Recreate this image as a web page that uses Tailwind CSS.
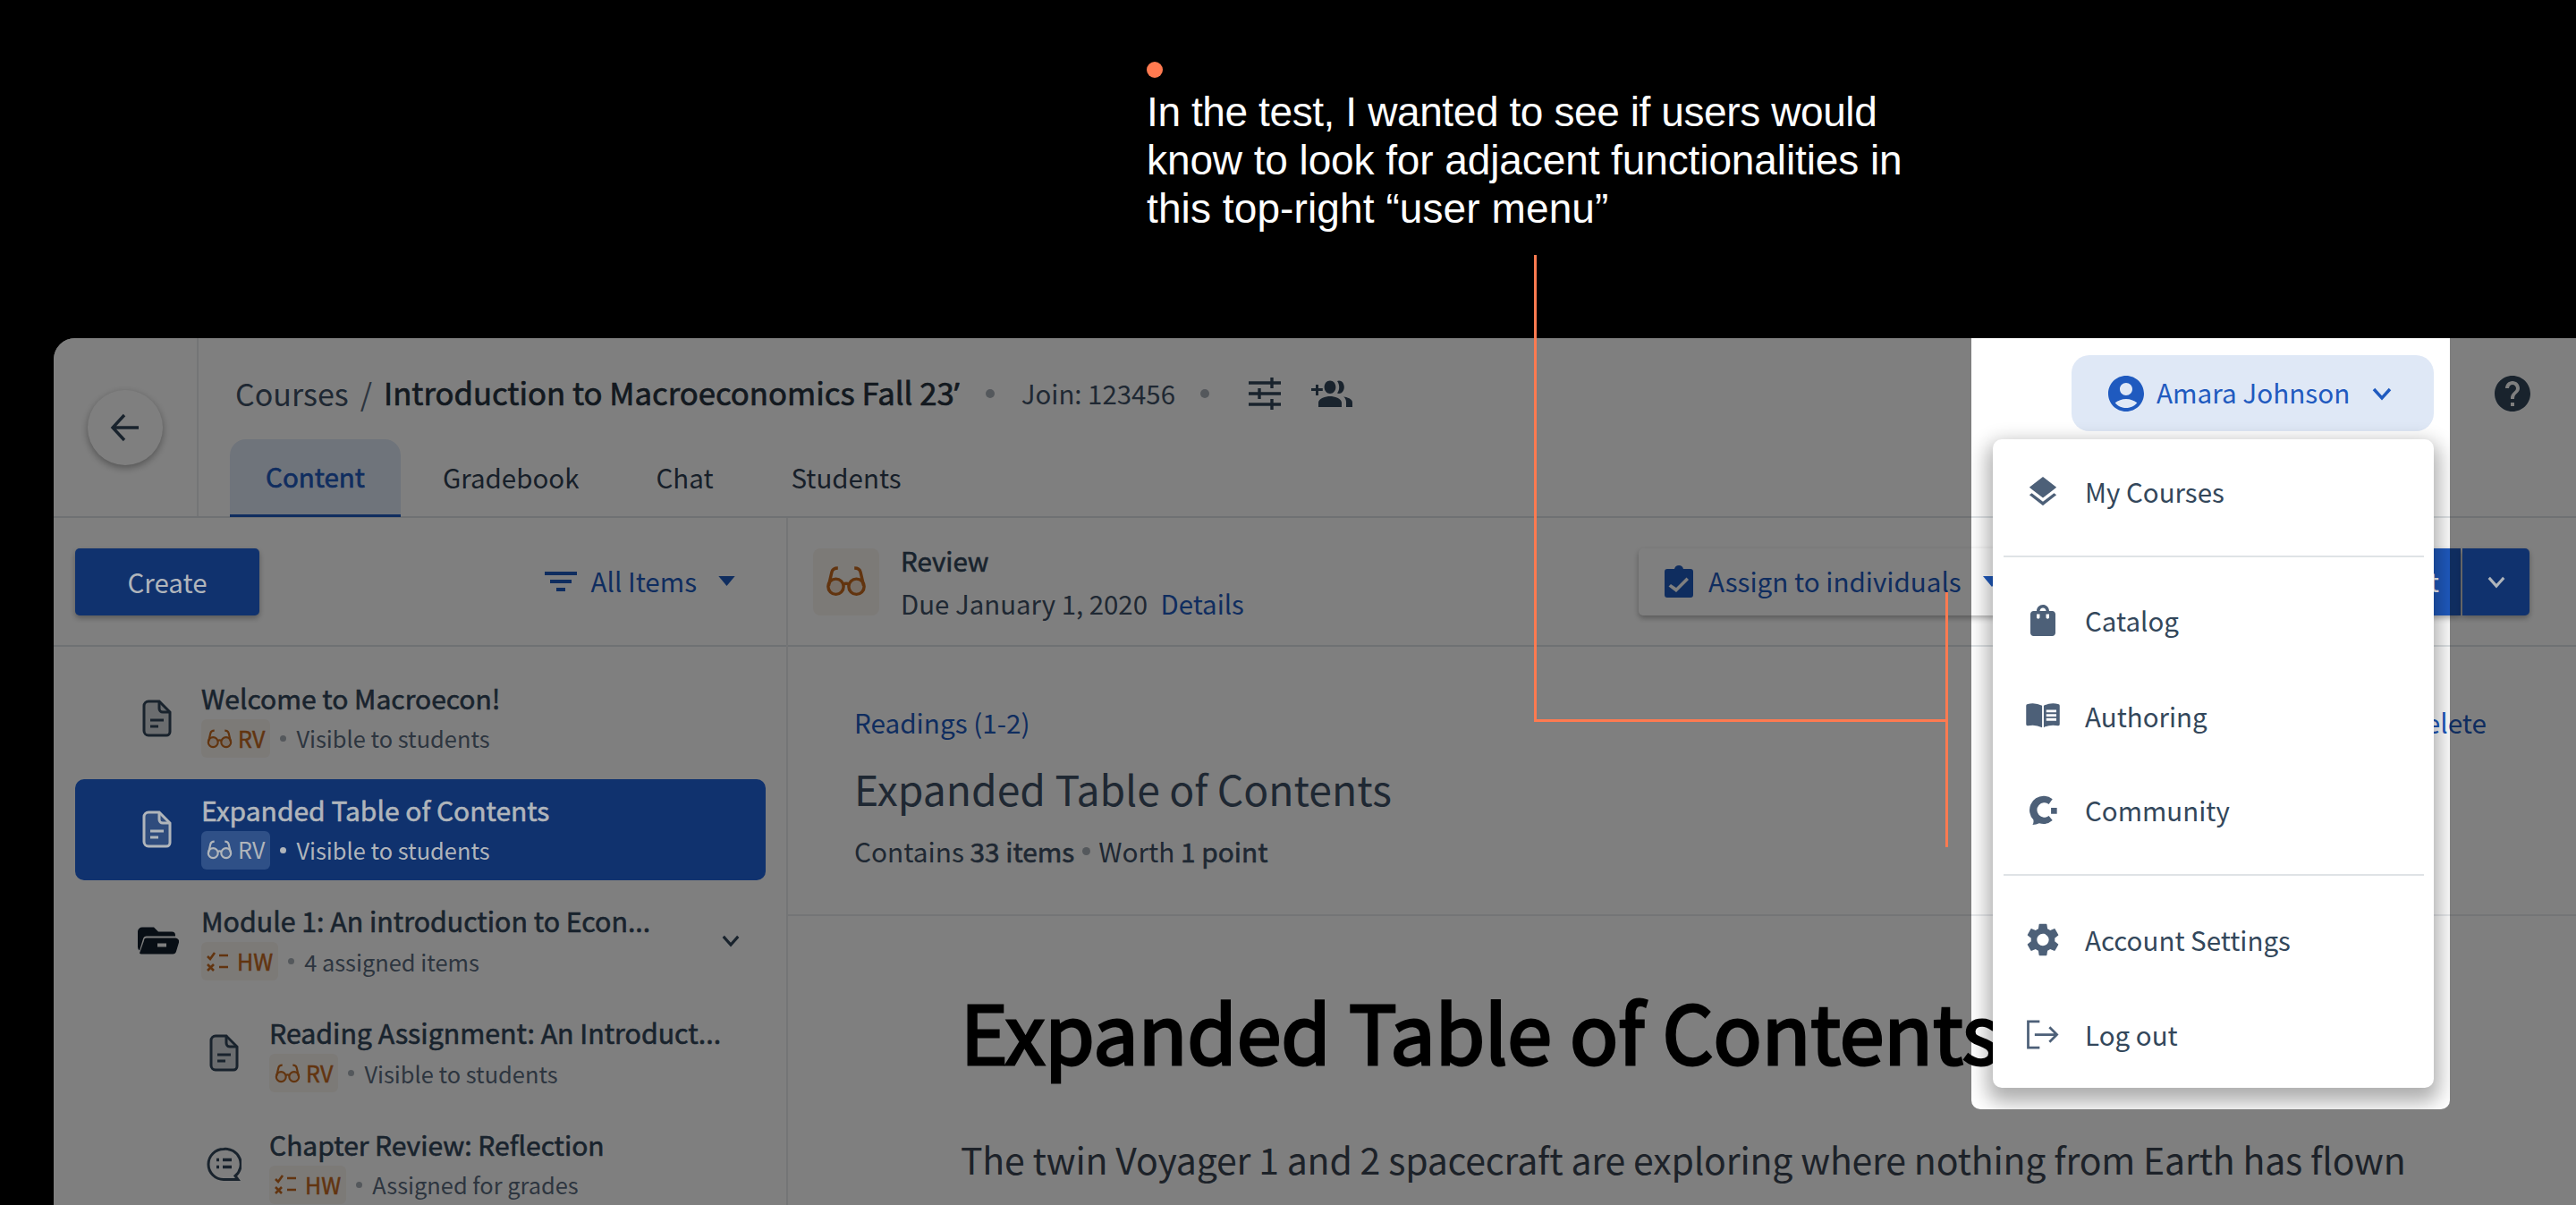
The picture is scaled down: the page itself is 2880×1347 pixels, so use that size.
<!DOCTYPE html>
<html>
<head>
<meta charset="utf-8">
<script src="https://cdn.jsdelivr.net/npm/@tailwindcss/browser@4"></script>
</head>
<body class="bg-black">
<svg class="hidden">
  <defs>
    <symbol id="doc" viewBox="0 0 34 42"><path d="M8 2h12l12 12v22a4 4 0 0 1-4 4H8a5 5 0 0 1-5-5V7a5 5 0 0 1 5-5z" fill="currentColor" fill-opacity=".2" stroke="currentColor" stroke-width="3"/><path d="M20 2v8a4 4 0 0 0 4 4h8" fill="none" stroke="currentColor" stroke-width="3"/><path d="M10 23h15M10 30h9" stroke="currentColor" stroke-width="3" fill="none"/></symbol>
    <symbol id="glasses" viewBox="0 0 40 32"><circle cx="10" cy="21" r="7.500" fill="currentColor" fill-opacity=".15" stroke="currentColor" stroke-width="3"/><circle cx="30" cy="21" r="7.500" fill="currentColor" fill-opacity=".15" stroke="currentColor" stroke-width="3"/><path d="M17 19q3-2 6 0M3 20 6 7q1-4 6-4M37 20 34 7q-1-4-6-4" fill="none" stroke="currentColor" stroke-width="3"/></symbol>
    <symbol id="hw" viewBox="0 0 26 24"><path d="M1 6l3 3 5-7M1 15l7 7M8 15l-7 7M14 5h10M14 18h10" fill="none" stroke="currentColor" stroke-width="2.600"/></symbol>
    <symbol id="chev" viewBox="0 0 24 16"><path d="M3 3l9 10 9-10" fill="none" stroke="currentColor" stroke-width="3.400"/></symbol>
    <symbol id="tri" viewBox="0 0 20 12"><path d="M0 0h20L10 12z" fill="currentColor"/></symbol>
  </defs>
</svg>
<div class="relative w-[2880px] h-[1347px] overflow-hidden font-['Noto_Sans_CJK_SC','Noto_Sans',sans-serif]">
  <section class="h-[378px] pl-[1282px] pt-[69px] font-['Liberation_Sans',sans-serif] text-white">
    <div class="w-[18px] h-[18px] rounded-full bg-[#ff7a50]"></div>
    <p class="mt-[11px] text-[46px] leading-[54px]"><span class="tracking-[-0.4px]">In the test, I wanted to see if users would</span><br><span class="tracking-[-0.1px]">know to look for adjacent functionalities in</span><br><span class="tracking-[0.1px]">this top-right “user menu”</span></p>
  </section>

  <main class="relative ml-[60px] h-[969px] bg-white rounded-tl-[24px] overflow-hidden text-[#2f3f52]">
    <header class="flex h-[201px] border-b-2 border-[#dfe3e6]">
      <div class="w-[162px] shrink-0 border-r-2 border-[#e8eaed] flex items-center justify-center">
        <button class="w-[84px] h-[84px] rounded-full bg-white shadow-[0_3px_8px_rgba(0,0,0,.35)] flex items-center justify-center text-[#33475b]">
          <svg class="w-[34px] h-[32px]" viewBox="0 0 34 32" fill="none" stroke="currentColor" stroke-width="3.400"><path d="M32 16H3M16 2 3 16l13 14"/></svg>
        </button>
      </div>
      <div class="flex-1 flex flex-col min-w-0">
        <div class="flex items-center h-[85px] mt-[19px] mb-[9px] pl-[41px] pr-[51px]">
          <span class="text-[34px] text-[#3f5166]">Courses</span>
          <span class="text-[34px] text-[#5a6b7e] mx-[13px]">/</span>
          <span class="text-[34.700px] text-[#26323f] [-webkit-text-stroke:0.7px_currentColor]">Introduction to Macroeconomics Fall 23<span class="font-['Noto_Sans',sans-serif]">’</span></span>
          <span class="w-[10px] h-[10px] rounded-full bg-[#a9b0b8] ml-[29px] mr-[30px]"></span>
          <span class="text-[29.400px] text-[#3f5166]">Join: 123456</span>
          <span class="w-[10px] h-[10px] rounded-full bg-[#a9b0b8] ml-[28px] mr-[44px]"></span>
          <svg class="w-[36px] h-[36px] text-[#33475b]" viewBox="0 0 36 36" fill="none" stroke="currentColor" stroke-width="3.400"><path d="M0 6h36M0 18h36M0 30h36M26 0v12M12 12v12M26 24v12"/></svg>
          <svg class="w-[48px] h-[32px] ml-[32px] text-[#33475b]" viewBox="0 0 24 16" fill="currentColor"><path d="M5 5V3H3.500v2H1v1.500h2.500V9H5V6.500h2.400V5zM11.500 8c1.900 0 3.200-1.600 3.200-3.600S13.400.8 11.500.8 8.300 2.400 8.300 4.400 9.600 8 11.500 8zM16.500 8c1.700 0 2.900-1.600 2.900-3.600S18.200.8 16.500.8c-.4 0-.7.100-1 .2.700 1 1.100 2.100 1.100 3.400s-.4 2.500-1.100 3.400c.3.100.6.200 1 .2zM11.500 9.500c-2.400 0-6.500 1.200-6.500 3.500v2.500h13V13c0-2.300-4.100-3.500-6.500-3.500zM19 9.800c1.200.8 1.500 2 1.500 3.200v2.500H24V13c0-2-3-3-5-3.200z"/></svg>
          <div class="ml-auto flex items-center h-[85px] w-[405px] rounded-[20px] bg-[#dfe8f6] text-[#1f5abf] pl-[41px]">
            <svg class="w-[40px] h-[40px]" viewBox="2 2 20 20" fill="currentColor"><path d="M12 2C6.480 2 2 6.480 2 12s4.480 10 10 10 10-4.480 10-10S17.520 2 12 2zm0 4c1.930 0 3.500 1.570 3.500 3.500S13.930 13 12 13s-3.500-1.570-3.500-3.500S10.070 6 12 6zm0 14c-2.030 0-4.430-.82-6.140-2.880C7.550 15.800 9.680 15 12 15s4.450.8 6.140 2.120C16.430 19.180 14.030 20 12 20z"/></svg>
            <span class="ml-[14px] text-[29.700px] leading-[40px] pb-[2px]">Amara Johnson</span>
            <svg class="w-[24px] h-[16px] ml-[24px]"><use href="#chev"/></svg>
          </div>
          <svg class="w-[40px] h-[40px] ml-[68px] text-[#33475b]" viewBox="2 2 20 20" fill="currentColor"><path d="M12 2C6.480 2 2 6.480 2 12s4.480 10 10 10 10-4.480 10-10S17.520 2 12 2zm1 17h-2v-2h2v2zm2.070-7.750l-.9.92C13.450 12.900 13 13.500 13 15h-2v-.5c0-1.100.45-2.100 1.170-2.830l1.240-1.260c.37-.36.59-.86.59-1.410 0-1.100-.9-2-2-2s-2 .9-2 2H8c0-2.210 1.790-4 4-4s4 1.790 4 4c0 .88-.36 1.680-.93 2.250z"/></svg>
        </div>
        <nav class="flex ml-[35px] h-[87px] text-[29.500px]">
          <a class="w-[191px] h-[87px] pb-[2px] rounded-t-[18px] bg-[#dfe8f6] border-b-[3px] border-[#1f5abf] flex items-center justify-center text-[#1f5abf] [-webkit-text-stroke:0.7px_currentColor]">Content</a>
          <a class="ml-[47px] pb-[3px] flex items-center">Gradebook</a>
          <a class="ml-[86px] pb-[3px] flex items-center">Chat</a>
          <a class="ml-[87px] pb-[3px] flex items-center">Students</a>
        </nav>
      </div>
    </header>

    <div class="flex h-[768px]">
      <aside class="w-[821px] shrink-0 border-r-2 border-[#e8eaed]">
        <div class="flex items-center justify-between h-[144px] border-b-2 border-[#dfe3e6] pl-[24px] pr-[56px]">
          <button class="w-[206px] h-[75px] rounded-[5px] bg-[#2064dc] text-[29.500px] shadow-[0_3px_6px_rgba(0,0,0,.3)]"><span class="relative z-10 text-[#b0b5bb]">Create</span></button>
          <div class="flex items-center text-[#1f5abf]">
            <svg class="w-[36px] h-[22px]" viewBox="0 0 36 22" fill="currentColor"><path d="M0 0h36v4H0zM6 9h24v4H6zM13 18h10v4H13z"/></svg>
            <span class="ml-[16px] text-[29.600px]">All Items</span>
            <svg class="w-[21px] h-[11px] ml-[23px]"><use href="#tri"/></svg>
          </div>
        </div>
        <ul class="flex flex-col gap-[11.700px] pt-[23px] pl-[24px] pr-[23px]">
          <li class="flex items-center h-[113px] pl-[74px]">
            <svg class="w-[34px] h-[42px] text-[#33475b] shrink-0"><use href="#doc"/></svg>
            <div class="ml-[33px]">
              <div class="text-[30px] leading-[44px] text-[#33475b] [-webkit-text-stroke:0.6px_currentColor]">Welcome to Macroecon!</div>
              <div class="flex items-center mt-[2px] h-[43px] text-[25.400px] text-[#5a6b7e]">
                <span class="flex items-center h-[43px] pl-[6px] pr-[6px] rounded-[6px] bg-[#f9f4ef] text-[#c4691e] text-[25px] [-webkit-text-stroke:0.5px_currentColor]"><svg class="w-[29px] h-[24px] mr-[6px]"><use href="#glasses"/></svg>RV</span>
                <span class="w-[7px] h-[7px] rounded-full bg-[#a9b0b8] mx-[11px]"></span>Visible to students
              </div>
            </div>
          </li>
          <li class="flex items-center h-[113px] pl-[74px] rounded-[10px] bg-[#2064dc]">
            <svg class="w-[34px] h-[42px] shrink-0 relative z-10 text-[#b0b5bb]"><use href="#doc"/></svg>
            <div class="ml-[33px] relative z-10 text-[#b0b5bb]">
              <div class="text-[30px] leading-[44px] [-webkit-text-stroke:0.6px_currentColor]">Expanded Table of Contents</div>
              <div class="flex items-center mt-[2px] h-[43px] text-[25.400px]">
                <span class="flex items-center h-[43px] pl-[6px] pr-[6px] rounded-[6px] bg-[#2f5087] text-[25px]"><svg class="w-[29px] h-[24px] mr-[6px]"><use href="#glasses"/></svg>RV</span>
                <span class="w-[7px] h-[7px] rounded-full bg-[#b0b5bb] mx-[11px]"></span>Visible to students
              </div>
            </div>
          </li>
          <li class="flex items-center h-[113px] pl-[70px]">
            <svg class="w-[46px] h-[33px] text-[#101c2a] shrink-0" viewBox="0 0 46 30" fill="currentColor"><path d="M5 0h13l5 5h15a4 4 0 0 1 4 4v1H10a4 4 0 0 0-4 3L2 26q-2-1-2-4V5a5 5 0 0 1 5-5zM10 12h32a4 4 0 0 1 4 5l-3 10a4 4 0 0 1-4 3H4a3 3 0 0 1-2-1l5-14a3 3 0 0 1 3-3zm12 6v4h10v-4z" fill-rule="evenodd"/></svg>
            <div class="ml-[25px] flex-1 min-w-0">
              <div class="text-[30.300px] leading-[44px] text-[#33475b] [-webkit-text-stroke:0.6px_currentColor]">Module 1: An introduction to Econ...</div>
              <div class="flex items-center mt-[2px] h-[43px] text-[25.400px] text-[#5a6b7e]">
                <span class="flex items-center h-[43px] pl-[6px] pr-[6px] rounded-[6px] bg-[#f9f4ef] text-[#c4691e] text-[25px] [-webkit-text-stroke:0.5px_currentColor]"><svg class="w-[26px] h-[24px] mr-[8px]"><use href="#hw"/></svg>HW</span>
                <span class="w-[7px] h-[7px] rounded-full bg-[#a9b0b8] mx-[11px]"></span>4 assigned items
              </div>
            </div>
            <svg class="w-[22px] h-[15px] mr-[28px] text-[#33475b]"><use href="#chev"/></svg>
          </li>
          <li class="flex items-center h-[113px] pl-[149px]">
            <svg class="w-[34px] h-[42px] text-[#33475b] shrink-0"><use href="#doc"/></svg>
            <div class="ml-[34px]">
              <div class="text-[30.300px] leading-[44px] text-[#33475b] [-webkit-text-stroke:0.6px_currentColor]">Reading Assignment: An Introduct...</div>
              <div class="flex items-center mt-[2px] h-[43px] text-[25.400px] text-[#5a6b7e]">
                <span class="flex items-center h-[43px] pl-[6px] pr-[6px] rounded-[6px] bg-[#f9f4ef] text-[#c4691e] text-[25px] [-webkit-text-stroke:0.5px_currentColor]"><svg class="w-[29px] h-[24px] mr-[6px]"><use href="#glasses"/></svg>RV</span>
                <span class="w-[7px] h-[7px] rounded-full bg-[#a9b0b8] mx-[11px]"></span>Visible to students
              </div>
            </div>
          </li>
          <li class="flex items-center h-[113px] pl-[146px]">
            <svg class="w-[40px] h-[41px] text-[#33475b] shrink-0" viewBox="0 0 40 38" fill="none" stroke="currentColor" stroke-width="3"><path d="M20 2a17 17 0 1 0 0 34h16l-3-4a17 17 0 0 0-13-30z"/><path d="M12 14h3M19 14h10M12 22h3M19 22h10" stroke-width="3.400"/></svg>
            <div class="ml-[31px]">
              <div class="text-[30px] leading-[44px] text-[#33475b] [-webkit-text-stroke:0.6px_currentColor]">Chapter Review: Reflection</div>
              <div class="flex items-center mt-[2px] h-[43px] text-[25.400px] text-[#5a6b7e]">
                <span class="flex items-center h-[43px] pl-[6px] pr-[6px] rounded-[6px] bg-[#f9f4ef] text-[#c4691e] text-[25px] [-webkit-text-stroke:0.5px_currentColor]"><svg class="w-[26px] h-[24px] mr-[8px]"><use href="#hw"/></svg>HW</span>
                <span class="w-[7px] h-[7px] rounded-full bg-[#a9b0b8] mx-[11px]"></span>Assigned for grades
              </div>
            </div>
          </li>
        </ul>
      </aside>

      <div class="flex-1 min-w-0">
        <div class="flex items-center h-[144px] border-b-2 border-[#dfe3e6] pl-[28px] pr-[52px]">
          <span class="flex items-center justify-center w-[74px] h-[75px] rounded-[8px] bg-[#f9f4ef] text-[#c4691e]"><svg class="w-[46px] h-[38px]" ><use href="#glasses"/></svg></span>
          <div class="ml-[24px]">
            <div class="text-[29.500px] leading-[40px] text-[#33475b] [-webkit-text-stroke:0.6px_currentColor]">Review</div>
            <div class="mt-[8px] text-[29.400px] leading-[40px] text-[#3f5166]">Due January 1, 2020 <a class="ml-[8px] text-[#1f5abf]">Details</a></div>
          </div>
          <button class="ml-auto flex items-center w-[420px] h-[75px] pl-[29px] rounded-[5px] bg-white shadow-[0_3px_6px_rgba(0,0,0,.3)] text-[#1f5abf] text-[29.600px]">
            <svg class="w-[32px] h-[36px]" viewBox="0 0 32 36" fill="currentColor"><path fill-rule="evenodd" d="M3 4h8q1-4 5-4t5 4h8a3 3 0 0 1 3 3v26a3 3 0 0 1-3 3H3a3 3 0 0 1-3-3V7a3 3 0 0 1 3-3zm4 17-2.500 2.500L13 30l14-14-2.500-2.500L13 25z"/></svg>
            <span class="ml-[17px]">Assign to individuals</span>
            <svg class="w-[20px] h-[12px] ml-[24px]"><use href="#tri"/></svg>
          </button>
          <button class="ml-[20px] w-[479px] h-[75px] rounded-l-[5px] bg-[#1f5abf] text-white text-[29.600px] text-right pr-[24px] shadow-[0_3px_6px_rgba(0,0,0,.3)]">Edit</button>
          <button class="ml-[2px] w-[75px] h-[75px] rounded-r-[5px] bg-[#2064dc] flex items-center justify-center shadow-[0_3px_6px_rgba(0,0,0,.3)]"><svg class="w-[22px] h-[15px] relative z-10 text-[#b0b5bb]"><use href="#chev"/></svg></button>
        </div>
        <div class="relative h-[301px] border-b-2 border-[#e8eaed] pl-[74px] pr-[100px] pt-[67px]">
          <div class="flex justify-between text-[29.700px] leading-[36px] text-[#1f5abf]"><a>Readings (1-2)</a><a>Delete</a></div>
          <h2 class="mt-[23px] text-[46.300px] leading-[64px] text-[#3f5166]">Expanded Table of Contents</h2>
          <p class="mt-[18px] text-[29.800px] leading-[40px] text-[#3f5166] flex items-center">Contains&nbsp;<b class="font-normal [-webkit-text-stroke:0.6px_currentColor]">33 items</b><span class="w-[9px] h-[9px] rounded-full bg-[#a9b0b8] mx-[9px]"></span>Worth&nbsp;<b class="font-normal [-webkit-text-stroke:0.6px_currentColor]">1 point</b></p>
        </div>
        <article class="pl-[193px] pt-[67px] whitespace-nowrap">
          <h1 class="text-[89.500px] leading-[120px] text-black [-webkit-text-stroke:3px_currentColor]">Expanded Table of Contents</h1>
          <p class="mt-[54px] text-[41px] leading-[60px] tracking-[-0.2px] text-[#3a4552]">The twin Voyager 1 and 2 spacecraft are exploring where nothing from Earth has flown</p>
        </article>
      </div>
    </div>

    <div class="absolute left-[2144px] top-0 w-[535px] h-[862px] rounded-b-[10px] overflow-hidden shadow-[0_0_0_4000px_rgba(0,0,0,.5)]">
      <div class="absolute left-[24px] top-[113px] w-[493px] h-[725px] rounded-[10px] bg-white shadow-[0_10px_22px_6px_rgba(0,0,0,.32)] text-[#33475b] text-[29.500px]">
        <a class="absolute left-0 right-0 top-[-2px] h-[120px] flex items-center pl-[36px]"><svg class="w-[40px] h-[32px] text-[#4d6078]" viewBox="3 2 18 19" fill="currentColor"><path d="M11.990 18.540l-7.370-5.730L3 14.070l9 7 9-7-1.630-1.270-7.380 5.740zM12 16l7.360-5.730L21 9l-9-7-9 7 1.630 1.270L12 16z"/></svg><span class="ml-[27px]">My Courses</span></a>
        <div class="absolute left-[12px] right-[11px] top-[130px] h-[2px] bg-[#dfe3e6]"></div>
        <a class="absolute left-0 right-0 top-[172px] h-[60px] flex items-center pl-[36px]"><svg class="w-[40px] h-[35px] text-[#4d6078]" viewBox="4 2 16 20" fill="currentColor"><path d="M18 6h-2c0-2.210-1.790-4-4-4S8 3.790 8 6H6c-1.100 0-2 .9-2 2v12c0 1.100.9 2 2 2h12c1.100 0 2-.9 2-2V8c0-1.100-.9-2-2-2zm-8 4c0 .55-.45 1-1 1s-1-.45-1-1V8h2v2zm2-6c1.100 0 2 .9 2 2h-4c0-1.100.9-2 2-2zm4 6c0 .55-.45 1-1 1s-1-.45-1-1V8h2v2z"/></svg><span class="ml-[27px]">Catalog</span></a>
        <a class="absolute left-0 right-0 top-[279px] h-[60px] flex items-center pl-[36px]"><svg class="w-[40px] h-[30px] text-[#4d6078]" viewBox="0 0 40 32" fill="currentColor"><path fill-rule="evenodd" d="M2 2q9-2 17 2v26q-8-4-17-2a2 2 0 0 1-2-2V4a2 2 0 0 1 2-2zM21 4q8-4 17-2a2 2 0 0 1 2 2v22a2 2 0 0 1-2 2q-9-2-17 2zM24 9v3h12V9zM24 14v3h12v-3zM24 19v3h12v-3z"/></svg><span class="ml-[27px]">Authoring</span></a>
        <a class="absolute left-0 right-0 top-[384px] h-[60px] flex items-center pl-[36px]"><svg class="w-[40px] h-[33px] text-[#4d6078]" viewBox="0 0 40 40" fill="currentColor"><path d="M21 1a19 19 0 0 1 12 4l-5 7a10 10 0 1 0 0 16l5 6a19 19 0 0 1-18 4q-4 2-9 2 2-3 1-7A19 19 0 0 1 21 1zM31 17h8v8h-8z"/></svg><span class="ml-[27px]">Community</span></a>
        <div class="absolute left-[12px] right-[11px] top-[486px] h-[2px] bg-[#dfe3e6]"></div>
        <a class="absolute left-0 right-0 top-[529px] h-[60px] flex items-center pl-[36px]"><svg class="w-[40px] h-[37px] text-[#4d6078]" viewBox="2.500 2 19 20" fill="currentColor"><path d="M19.140 12.940c.04-.3.06-.61.06-.94 0-.32-.02-.64-.07-.94l2.030-1.580c.18-.14.23-.41.12-.61l-1.920-3.320c-.12-.22-.37-.29-.59-.22l-2.390.96c-.5-.38-1.030-.7-1.620-.94l-.36-2.540c-.04-.24-.24-.41-.48-.41h-3.840c-.24 0-.43.17-.47.41l-.36 2.540c-.59.24-1.130.57-1.620.94l-2.390-.96c-.22-.08-.47 0-.59.22L2.740 8.870c-.12.21-.08.47.12.61l2.030 1.580c-.05.3-.09.63-.09.94s.02.64.07.94l-2.030 1.580c-.18.14-.23.41-.12.61l1.920 3.320c.12.22.37.29.59.22l2.390-.96c.5.38 1.030.7 1.620.94l.36 2.540c.05.24.24.41.48.41h3.840c.24 0 .44-.17.47-.41l.36-2.540c.59-.24 1.130-.56 1.620-.94l2.390.96c.22.08.47 0 .59-.22l1.920-3.320c.12-.22.07-.47-.12-.61l-2.010-1.580zM12 15.600c-1.980 0-3.600-1.620-3.600-3.600s1.620-3.600 3.600-3.600 3.600 1.620 3.600 3.600-1.620 3.600-3.600 3.600z"/></svg><span class="ml-[27px]">Account Settings</span></a>
        <a class="absolute left-0 right-0 top-[635px] h-[60px] flex items-center pl-[36px]"><svg class="w-[40px] h-[33px] text-[#4d6078]" viewBox="0 0 40 36" fill="none" stroke="currentColor" stroke-width="3"><path d="M16 2H2v32h14M10 18h27M28 9l9 9-9 9"/></svg><span class="ml-[27px]">Log out</span></a>
      </div>
    </div>
  </main>

  <div class="absolute left-[1715px] top-[285px] w-[3px] h-[522px] bg-[#ff7a50]"></div>
  <div class="absolute left-[1715px] top-[804px] w-[462px] h-[3px] bg-[#ff7a50]"></div>
  <div class="absolute left-[2175px] top-[662px] w-[3px] h-[285px] bg-[#ff7a50]"></div>
</div>
</body>
</html>
